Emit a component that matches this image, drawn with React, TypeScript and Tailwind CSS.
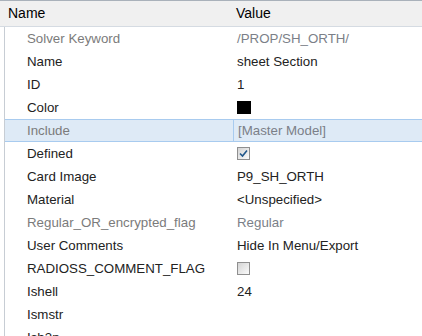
import { ReactNode } from 'react';

type Row = {
  label: string;
  value?: ReactNode;
  dim?: boolean;
  dimValue?: boolean;
  selected?: boolean;
};

function Check({ checked }: { checked: boolean }) {
  return (
    <span className="inline-flex h-[13px] w-[13px] items-center justify-center border border-[#8f8f8f] bg-gradient-to-br from-[#d4d4d4] to-[#fbfbfb]">
      {checked && (
        <svg width="9" height="9" viewBox="0 0 9 9">
          <path d="M1 4.5 L3.5 7 L8 1.5" fill="none" stroke="#21578a" strokeWidth="1.6" />
        </svg>
      )}
    </span>
  );
}

const rows: Row[] = [
  { label: 'Solver Keyword', value: '/PROP/SH_ORTH/', dim: true, dimValue: true },
  { label: 'Name', value: 'sheet Section' },
  { label: 'ID', value: '1' },
  { label: 'Color', value: <span className="inline-block h-[13px] w-[14px] bg-black" /> },
  { label: 'Include', value: '[Master Model]', dim: true, dimValue: true, selected: true },
  { label: 'Defined', value: <Check checked /> },
  { label: 'Card Image', value: 'P9_SH_ORTH' },
  { label: 'Material', value: '<Unspecified>' },
  { label: 'Regular_OR_encrypted_flag', value: 'Regular', dim: true, dimValue: true },
  { label: 'User Comments', value: 'Hide In Menu/Export' },
  { label: 'RADIOSS_COMMENT_FLAG', value: <Check checked={false} /> },
  { label: 'Ishell', value: '24' },
  { label: 'Ismstr' },
  { label: 'Ish3n' },
];

export default function App() {
  return (
    <div className="h-[336px] w-[422px] overflow-hidden bg-white font-['Liberation_Sans',Arial,sans-serif] text-[13.3px] text-[#222]">
      {/* header */}
      <div className="flex h-[27px] items-center border-t border-t-[#a9b1ba] border-b border-b-[#d5dbe2] bg-[#f0f0f0]">
        <div className="w-[233px] pl-[8px] text-[14px] text-black">Name</div>
        <div className="pl-[3px] text-[14px] text-black">Value</div>
      </div>
      <div className="ml-[4px] border-l border-l-[#c7cdd4]">
        {rows.map(r => (
          <div
            key={r.label}
            className={
              'flex h-[23px] items-center ' +
              (r.selected ? 'border-y border-y-[#a8cbef] bg-[#deeaf6]' : '')
            }
          >
            <div className={'w-[228px] whitespace-nowrap pl-[22px] ' + (r.dim ? 'text-[#7b7b7b]' : '')}>{r.label}</div>
            <div
              className={
                'flex h-full flex-1 items-center pl-[4px] ' +
                (r.selected ? 'border-l border-l-[#a8cbef] ' : '') +
                (r.dimValue ? 'text-[#7b7f88]' : '')
              }
            >
              {r.value}
            </div>
          </div>
        ))}
      </div>
    </div>
  );
}
